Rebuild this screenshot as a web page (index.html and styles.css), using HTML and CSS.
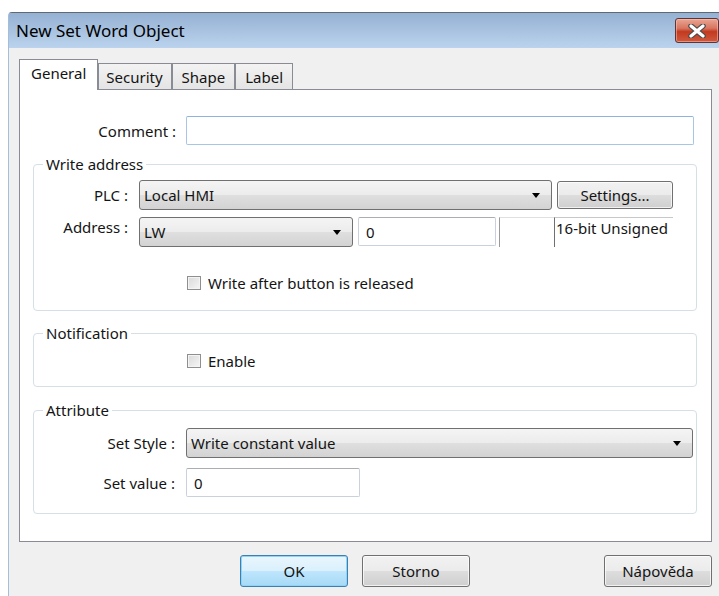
FILE: index.html
```html
<!DOCTYPE html>
<html lang="en">
<head>
<meta charset="utf-8">
<title>New Set Word Object</title>
<link rel="stylesheet" href="styles.css">
</head>
<body>
<div class="window">
  <div class="titlebar">
    <span class="title">New Set Word Object</span>
    <div class="close">
      <svg width="20" height="14" viewBox="0 0 20 14">
        <path d="M4 2 L16 12 M16 2 L4 12" stroke="#4a4a4a" stroke-width="5.5" stroke-linecap="round"/>
        <path d="M4 2 L16 12 M16 2 L4 12" stroke="#ffffff" stroke-width="3.2" stroke-linecap="round"/>
      </svg>
    </div>
  </div>

  <div class="client">
    <div class="tabs">
      <div class="tab active">General</div>
      <div class="tab tab-narrow">Security</div>
      <div class="tab">Shape</div>
      <div class="tab">Label</div>
    </div>

    <div class="panel">
      <div class="row comment-row">
        <span class="lbl lbl-comment">Comment :</span>
        <div class="field field-comment"></div>
      </div>

      <fieldset class="group group-write">
        <legend>Write address</legend>
        <div class="row plc-row">
          <span class="lbl lbl-addr">PLC :</span>
          <div class="combo combo-plc"><span>Local HMI</span><i class="arrow"></i></div>
          <div class="btn btn-settings">Settings...</div>
        </div>
        <div class="row addr-row">
          <span class="lbl lbl-addr">Address :</span>
          <div class="combo combo-lw"><span>LW</span><i class="arrow"></i></div>
          <div class="field field-addr">0</div>
          <div class="stub stub-blank"></div>
          <div class="stub stub-type">16-bit Unsigned</div>
        </div>
        <div class="row check-row">
          <span class="check"></span><span>Write after button is released</span>
        </div>
      </fieldset>

      <fieldset class="group group-notify">
        <legend>Notification</legend>
        <div class="row check-row check-enable">
          <span class="check"></span><span>Enable</span>
        </div>
      </fieldset>

      <fieldset class="group group-attr">
        <legend>Attribute</legend>
        <div class="row style-row">
          <span class="lbl lbl-attr">Set Style :</span>
          <div class="combo combo-style"><span>Write constant value</span><i class="arrow"></i></div>
        </div>
        <div class="row value-row">
          <span class="lbl lbl-attr">Set value :</span>
          <div class="field field-value">0</div>
        </div>
      </fieldset>
    </div>

    <div class="actions">
      <div class="btn btn-dlg btn-ok">OK</div>
      <div class="btn btn-dlg">Storno</div>
      <div class="btn btn-dlg btn-help">Nápověda</div>
    </div>
  </div>
</div>
</body>
</html>
```

FILE: styles.css
```css
* {
  box-sizing: border-box;
}

html,
body {
  margin: 0;
  height: 100%;
}

body {
  background: #ffffff;
  overflow: hidden;
  font-family: "Noto Sans", "DejaVu Sans", sans-serif;
  font-size: 15px;
  color: #141414;
}

/* dialog frame */
.window {
  margin: 12px 0 0 8px;
  width: 717px;
  height: 600px;
  background: #f0f0f0;
  border-top: 1px solid #5f6873;
  border-left: 1px solid #a3bddb;
  border-top-left-radius: 4px;
}

.titlebar {
  height: 35px;
  display: flex;
  align-items: center;
  padding: 0 6px 0 7px;
  background: linear-gradient(#95b1d3, #bbd3ed);
}

.title {
  font-size: 17px;
  color: #000;
}

.close {
  margin-left: auto;
  width: 44px;
  height: 25px;
  border: 1px solid #5e3434;
  border-radius: 3px;
  background: linear-gradient(#e9a593 0%, #d87660 40%, #c23a20 55%, #cf5a3e 100%);
  box-shadow: inset 0 0 0 1px rgba(255, 200, 190, 0.5);
  display: flex;
  align-items: center;
  justify-content: center;
}

.client {
  padding: 11px 0 0 10px;
}

/* tab strip */
.tabs {
  display: flex;
  align-items: flex-end;
  height: 31px;
  margin-bottom: -1px;
  position: relative;
  z-index: 1;
}

.tab {
  height: 26px;
  margin-bottom: 1px;
  padding: 0 9px;
  border: 1px solid #898c95;
  border-bottom: none;
  background: linear-gradient(#f3f3f3, #e4e4e4);
  display: flex;
  align-items: center;
}

.tab-narrow {
  padding: 0 8px 0 7px;
}

.tab.active {
  height: 31px;
  margin-bottom: 0;
  padding: 0 11px 4px 11px;
  background: #ffffff;
}

.panel {
  width: 693px;
  height: 453px;
  border: 1px solid #898c95;
  background: #ffffff;
  padding: 26px 7px 0 13px;
}

.row {
  display: flex;
  align-items: center;
}

.lbl {
  text-align: right;
  flex: none;
}

.lbl-comment {
  width: 143px;
  margin-right: 10px;
}

.field {
  height: 29px;
  border: 1px solid #c9d2dc;
  border-top-color: #abadb3;
  border-radius: 2px;
  background: #fff;
  padding: 0 7px;
  display: flex;
  align-items: center;
}

.field-comment {
  width: 508px;
  border-color: #a7c6e6;
  border-top-color: #8fb3da;
}

/* group boxes */
.group {
  margin: 10px 7px 0 0;
  padding: 0;
  border: 1px solid #d5dfe5;
  border-radius: 4px;
  min-width: 0;
}

.group legend {
  margin-left: 9px;
  padding: 0 3px;
  line-height: 18px;
}

.lbl-addr {
  width: 94px;
  margin-right: 11px;
}

.plc-row {
  margin-top: 7px;
}

.combo {
  height: 30px;
  border: 1px solid #707070;
  border-radius: 3px;
  background: linear-gradient(#f4f4f4 0%, #ececec 50%, #dfdfdf 51%, #d3d3d3 100%);
  display: flex;
  align-items: center;
  padding: 0 11px 0 4px;
}

.combo span {
  flex: 1;
}

.arrow {
  width: 0;
  height: 0;
  border-left: 4px solid transparent;
  border-right: 4px solid transparent;
  border-top: 5px solid #000;
}

.combo-plc {
  width: 413px;
}

.btn {
  border: 1px solid #707070;
  border-radius: 3px;
  background: linear-gradient(#f2f2f2 0%, #ebebeb 50%, #dddddd 51%, #cfcfcf 100%);
  box-shadow: inset 0 0 0 1px rgba(255, 255, 255, 0.7);
  display: flex;
  align-items: center;
  justify-content: center;
}

.btn-settings {
  margin-left: 5px;
  width: 116px;
  height: 28px;
}

.addr-row {
  margin-top: 7px;
  align-items: flex-start;
}

.combo-lw {
  width: 214px;
}

.field-addr {
  margin-left: 5px;
  width: 138px;
}

.stub {
  height: 30px;
  border-top: 1px solid #d5d5d5;
  border-left: 1px solid #9a9a9a;
}

.stub-blank {
  margin-left: 3px;
  width: 55px;
  border-top-color: #e0e0e0;
}

.stub-type {
  width: 119px;
  padding: 1px 0 0 1px;
  line-height: 18px;
  border-top-color: #c8c8c8;
  border-left-color: #707070;
}

.check-row {
  margin: 26px 0 17px 153px;
}

.check {
  width: 14px;
  height: 14px;
  margin-right: 7px;
  border: 1px solid #8f8f8f;
  background: linear-gradient(135deg, #d9d9d9, #f6f6f6);
  box-shadow: inset 0 0 0 1px #f4f4f4;
}

.group-notify {
  margin-top: 13px;
}

.check-enable {
  margin: 9px 0 15px 153px;
}

.group-attr {
  margin-top: 14px;
}

.lbl-attr {
  width: 141px;
  margin-right: 11px;
}

.style-row {
  margin-top: 9px;
}

.combo-style {
  width: 507px;
}

.value-row {
  margin: 10px 0 16px;
}

.field-value {
  width: 174px;
}

/* dialog buttons */
.actions {
  display: flex;
  gap: 14px;
  width: 693px;
  margin-top: 13px;
  padding-left: 221px;
}

.btn-dlg {
  width: 108px;
  height: 32px;
}

.btn-ok {
  border-color: #3c7fb1;
  background: linear-gradient(#eaf6fd 0%, #d9f0fc 50%, #bee6fd 51%, #a7d9f5 100%);
  box-shadow: inset 0 0 0 1px #8fd4f7;
}

.btn-help {
  margin-left: auto;
}
```
